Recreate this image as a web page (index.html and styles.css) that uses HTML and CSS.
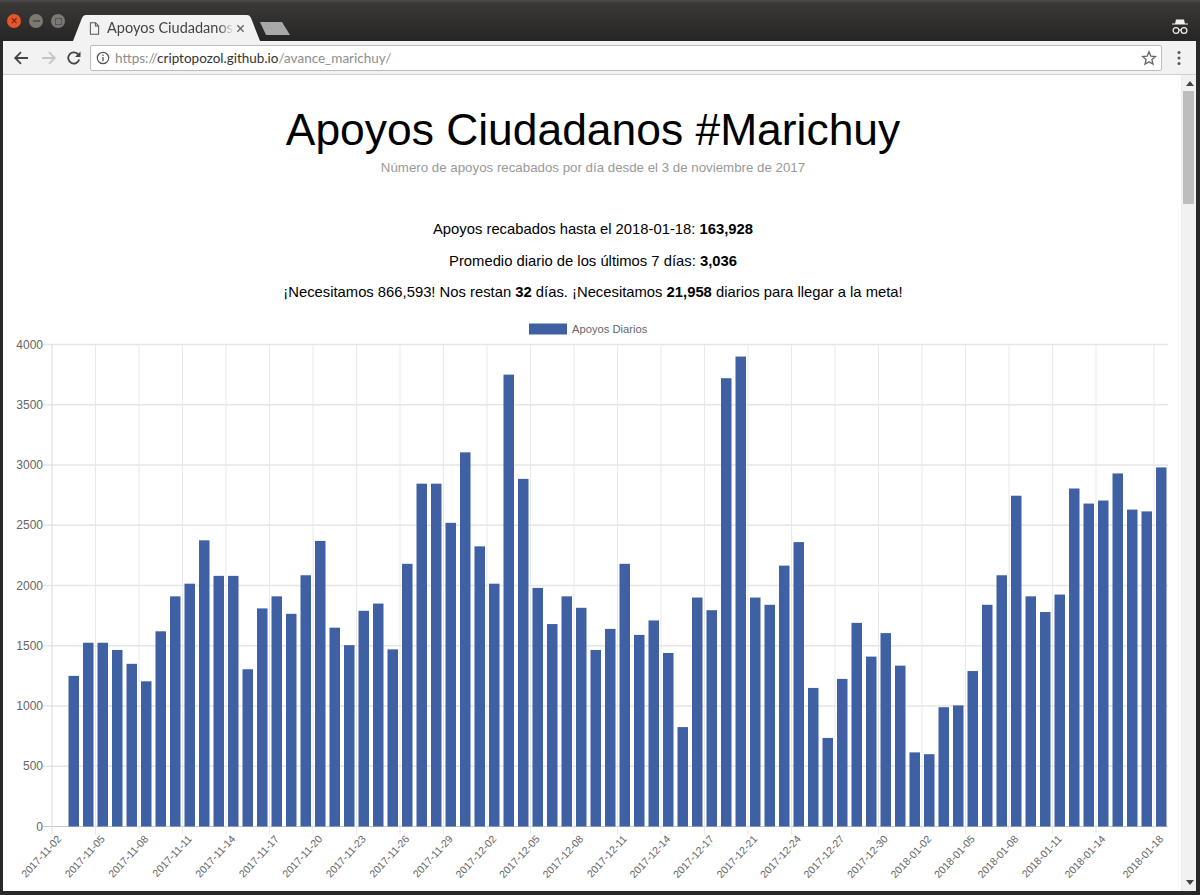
FILE: index.html
```html
<!DOCTYPE html>
<html lang="es">
<head>
<meta charset="utf-8">
<title>Apoyos Ciudadanos #Marichuy</title>
<link rel="stylesheet" href="styles.css">
</head>
<body>
<div class="window">
  <header class="titlebar">
    <div class="controls">
      <span class="ctl ctl-close">×</span>
      <span class="ctl ctl-min"><i class="dash"></i></span>
      <span class="ctl ctl-max"><i class="box"></i></span>
    </div>
    <div class="tab">
      <svg class="tab-shape" viewBox="0 0 187 26" preserveAspectRatio="none"><path d="M0 26L9 3C10 1 11 0 13 0H174C176 0 177 1 178 3L187 26Z"/></svg>
      <svg class="tab-doc" viewBox="0 0 12 14"><path d="M1.500.7h5.600l3.400 3.400v9.200h-9zM7 .7v3.600h3.500" fill="none" stroke="#555" stroke-width="1.100"/></svg>
      <span class="tab-title">Apoyos Ciudadanos</span>
      <svg class="tab-x" viewBox="0 0 10 10"><path d="M1.500 1.500l7 7M8.500 1.500l-7 7" stroke="#666" stroke-width="1.500"/></svg>
    </div>
    <svg class="newtab" viewBox="0 0 30 13"><path d="M0 0H22L30 13H6Z" fill="#a8a8a8"/></svg>
    <div class="spacer"></div>
    <svg class="incognito" viewBox="0 0 18 18"><path d="M5 1.500h8l.9 4H17v1H1v-1h3.100z" fill="#f0f0f0"/><circle cx="5" cy="12.500" r="2.900" fill="none" stroke="#f0f0f0" stroke-width="1.200"/><circle cx="13" cy="12.500" r="2.900" fill="none" stroke="#f0f0f0" stroke-width="1.200"/><path d="M7.900 12h2.200" stroke="#f0f0f0" stroke-width="1.200"/></svg>
  </header>
  <nav class="toolbar">
    <svg class="nav nav-back" viewBox="0 0 16 16"><path d="M15 8H2.500M8 2.200L2.200 8 8 13.800" fill="none" stroke="#444" stroke-width="1.800"/></svg>
    <svg class="nav nav-fwd" viewBox="0 0 16 16"><path d="M1 8h12.500M8 2.200L13.800 8 8 13.800" fill="none" stroke="#c4c4c4" stroke-width="1.800"/></svg>
    <svg class="nav nav-reload" viewBox="0 0 16 16"><path d="M13.200 9.500A5.600 5.600 0 1 1 11.800 4L13.500 5.600" fill="none" stroke="#444" stroke-width="1.800"/><path d="M14.500 1.500V7H9z" fill="#444"/></svg>
    <div class="omnibox">
      <svg class="info" viewBox="0 0 14 14"><circle cx="7" cy="7" r="5.700" fill="none" stroke="#555" stroke-width="1.200"/><path d="M7 6v4.200M7 3.600v1.300" stroke="#555" stroke-width="1.300"/></svg>
      <span class="url"><span class="url-dim">https://</span>criptopozol.github.io<span class="url-dim">/avance_marichuy/</span></span>
      <svg class="star" viewBox="0 0 16 16"><path d="M8 1.800l1.800 4.300 4.700.4-3.600 3 1.100 4.600L8 11.700l-4 2.400 1.100-4.600-3.600-3 4.700-.4z" fill="none" stroke="#666" stroke-width="1.300"/></svg>
    </div>
    <svg class="menu" viewBox="0 0 4 16"><circle cx="2" cy="2.500" r="1.500"/><circle cx="2" cy="8" r="1.500"/><circle cx="2" cy="13.500" r="1.500"/></svg>
  </nav>
  <div class="viewport">
    <main class="page">
      <h1 class="title">Apoyos Ciudadanos #Marichuy</h1>
      <p class="subtitle">Número de apoyos recabados por día desde el 3 de noviembre de 2017</p>
      <p class="stat stat-first">Apoyos recabados hasta el 2018-01-18: <b>163,928</b></p>
      <p class="stat">Promedio diario de los últimos 7 días: <b>3,036</b></p>
      <p class="stat">¡Necesitamos 866,593! Nos restan <b>32</b> días. ¡Necesitamos <b>21,958</b> diarios para llegar a la meta!</p>
      <div class="chart" id="chart"></div>
    </main>
    <aside class="scrollbar">
      <span class="arrow arrow-up"></span>
      <div class="track"><div class="thumb"></div></div>
      <span class="arrow arrow-down"></span>
    </aside>
  </div>
</div>
<script src="chart.js"></script>
</body>
</html>
```
FILE: styles.css
```css
* { box-sizing: border-box; }
html, body { margin: 0; height: 100%; overflow: hidden; background: #fff; }
body { font-family: "Liberation Sans", Arial, sans-serif; }
.window {
  width: 1200px; height: 895px;
  display: flex; flex-direction: column;
  background: #2a2928;
  padding: 0 4px 4px 3px;
}
.titlebar {
  height: 41px; flex: none;
  margin: 0 -4px 0 -3px;
  display: flex; align-items: flex-end;
  background: linear-gradient(#4a4947 0, #4a4947 1px, #3b3937 3px, #262524 100%);
}
.controls { width: 73px; height: 41px; flex: none; display: flex; align-items: flex-start; gap: 8px; padding: 14px 0 0 7px; }
.ctl {
  width: 14px; height: 14px; border-radius: 50%;
  display: flex; align-items: center; justify-content: center;
  font-size: 12px; line-height: 14px; color: #5a1a08;
}
.ctl-close { background: #e5562a; }
.ctl-min, .ctl-max { background: #7a7974; }
.dash { width: 7px; height: 2px; background: #55544f; }
.box { width: 7px; height: 7px; border: 1px solid #55544f; }
.tab { position: relative; width: 187px; height: 26px; flex: none; display: flex; align-items: center; }
.tab-shape { position: absolute; left: 0; top: 0; width: 100%; height: 100%; fill: #f2f2f2; }
.tab-doc { position: relative; width: 11px; height: 13px; margin-left: 16px; flex: none; }
.tab-title {
  position: relative; width: 127px; margin-left: 7px; flex: none;
  font: 14.500px/20px "Lato", sans-serif; color: #444; white-space: nowrap;
  -webkit-mask-image: linear-gradient(90deg, #000 88%, transparent);
  mask-image: linear-gradient(90deg, #000 88%, transparent);
}
.tab-x { position: relative; width: 9px; height: 9px; margin-left: 2px; flex: none; }
.newtab { width: 30px; height: 13px; margin: 0 0 6px 0; flex: none; }
.spacer { flex: 1; }
.incognito { width: 18px; height: 18px; margin: 0 11px 5px 0; flex: none; }
.toolbar {
  height: 34px; flex: none;
  display: flex; align-items: center;
  background: #f2f2f2;
  border-bottom: 1px solid #cfcfcf;
  padding: 0 0 0 10px;
}
.nav { width: 16px; height: 16px; flex: none; }
.nav-fwd { margin-left: 12px; }
.nav-reload { margin-left: 9px; }
.omnibox {
  width: 1072px; height: 26px; margin-left: 8px; flex: none;
  display: flex; align-items: center;
  background: #fff;
  border: 1px solid #bdbdbd; border-radius: 2px;
}
.info { width: 14px; height: 14px; margin-left: 5px; flex: none; }
.url { margin-left: 5px; font: 13.500px/20px "Lato", sans-serif; color: #333; white-space: nowrap; }
.url-dim { color: #8d8d8d; }
.star { width: 16px; height: 16px; margin-left: auto; margin-right: 4px; flex: none; }
.menu { width: 4px; height: 16px; margin-left: 15px; fill: #555; flex: none; }
.viewport { flex: 1; min-height: 0; display: flex; background: #fff; }
.page { flex: 1; min-width: 0; text-align: center; color: #000; padding: 27px 0 0 2px; }
.title { margin: 0; font-size: 44.400px; font-weight: 400; line-height: 55px; }
.subtitle { margin: 1px 0 0; font-size: 13.300px; line-height: 20px; color: #999; }
.stat { margin: 0; font-size: 14.800px; line-height: 22px; padding-top: 9.500px; }
.stat-first { padding-top: 40px; }
.chart { margin: 16px 0 0 -2px; height: 575px; }
.chart svg { display: block; width: 1179px; height: 575px; }
.grid { stroke: #e9e9e9; stroke-width: 1; }
.grid-h { stroke: #e6e6e6; stroke-width: 1.300; }
.grid-axis { stroke: #dcdcdc; stroke-width: 1; }
.grid-zero { stroke: #c9c9c9; stroke-width: 1; }
.bar { fill: #3f60a3; }
.tick-text { font: 12px "Liberation Sans", Arial, sans-serif; fill: #666; }
.tick-date { font: 10.500px "Liberation Sans", Arial, sans-serif; fill: #666; }
.legend-text { font: 11.200px "Liberation Sans", Arial, sans-serif; fill: #666; }
.scrollbar { width: 15px; flex: none; display: flex; flex-direction: column; align-items: center; background: #f1f1f1; padding: 0 0 0 1px; border-left: 1px solid #ececec; }
.arrow { width: 0; height: 0; flex: none; border-left: 4px solid transparent; border-right: 4px solid transparent; }
.arrow-up { border-bottom: 5px solid #444; margin-top: 6px; }
.arrow-down { border-top: 5px solid #444; margin-bottom: 6px; }
.track { flex: 1; width: 100%; padding-top: 5px; }
.thumb { width: 11px; height: 113px; background: #bdbdbd; }
```
FILE: chart.js
```js
var values = [1250,1525,1525,1465,1350,1205,1620,1910,2015,2375,2080,2080,1305,1810,1910,1765,2085,2370,1650,1505,1790,1850,1470,2180,2845,2845,2520,3105,2325,2015,3750,2885,1980,1680,1910,1815,1465,1640,2180,1590,1710,1440,825,1900,1795,3720,3900,1900,1840,2165,2360,1150,735,1225,1690,1410,1605,1335,615,600,990,1005,1290,1840,2085,2745,1910,1780,1925,2805,2680,2705,2930,2630,2615,2980];
var labels = ["2017-11-02","2017-11-05","2017-11-08","2017-11-11","2017-11-14","2017-11-17","2017-11-20","2017-11-23","2017-11-26","2017-11-29","2017-12-02","2017-12-05","2017-12-08","2017-12-11","2017-12-14","2017-12-17","2017-12-21","2017-12-24","2017-12-27","2017-12-30","2018-01-02","2018-01-05","2018-01-08","2018-01-11","2018-01-14","2018-01-18"];
var NS = "http://www.w3.org/2000/svg";
var svg = document.createElementNS(NS, "svg");
svg.setAttribute("viewBox", "0 0 1179 575");
var X0 = 49, STEP = 14.5, RIGHT = 1165, Y0 = 507.5, SCALE = 482 / 4000;
function add(tag, attrs, text) {
  var el = document.createElementNS(NS, tag);
  for (var k in attrs) el.setAttribute(k, attrs[k]);
  if (text) el.textContent = text;
  svg.appendChild(el);
  return el;
}
for (var v = 0; v <= 4000; v += 500) {
  var y = Y0 - v * SCALE;
  add("line", { x1: X0 - 9, x2: RIGHT, y1: y, y2: y, "class": v ? "grid-h" : "grid-zero" });
  add("text", { x: X0 - 9, y: y + 4, "text-anchor": "end", "class": "tick-text" }, String(v));
}
labels.forEach(function (label, i) {
  var x = X0 + (i === labels.length - 1 ? 76 : i * 3) * STEP;
  add("line", { x1: x, x2: x, y1: Y0 - 482, y2: Y0 + 8, "class": i ? "grid" : "grid-axis" });
  add("text", { x: x + 10, y: Y0 + 13, "text-anchor": "end", "class": "tick-date", transform: "rotate(-47 " + (x + 10) + " " + (Y0 + 13) + ")" }, label);
});
values.forEach(function (value, i) {
  var h = value * SCALE;
  add("rect", { x: X0 + (i + 1) * STEP + 2, y: Y0 - h, width: 10.5, height: h, "class": "bar" });
});
add("rect", { x: 526, y: 4.5, width: 38, height: 11, "class": "bar" });
add("text", { x: 569, y: 14, "class": "legend-text" }, "Apoyos Diarios");
document.getElementById("chart").appendChild(svg);
```
